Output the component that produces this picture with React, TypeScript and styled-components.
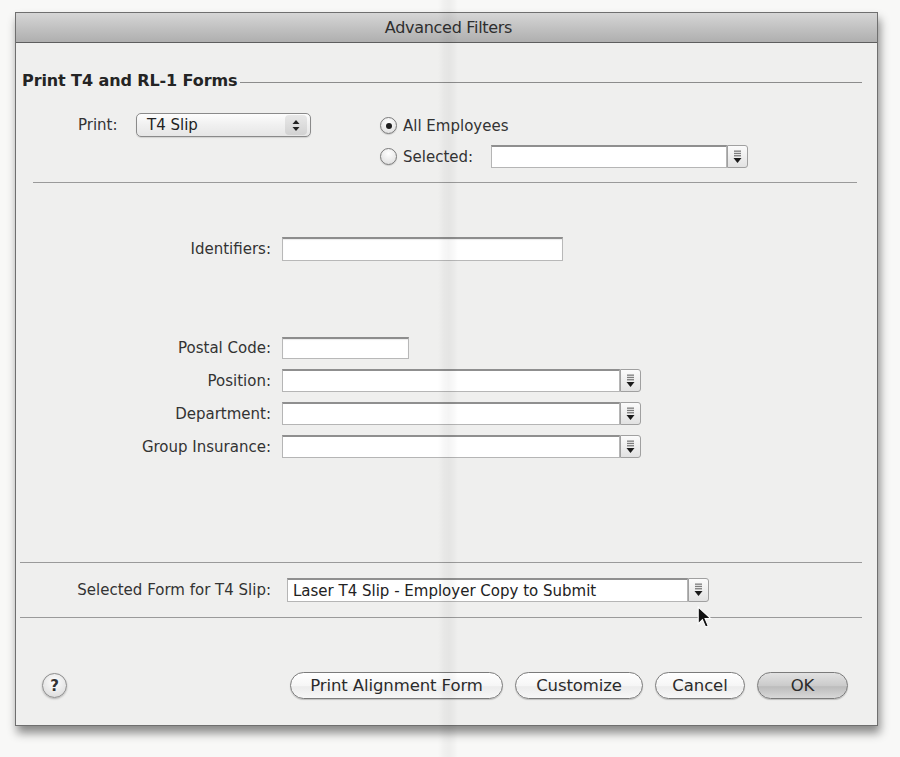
import React from "react";
import styled, { createGlobalStyle, css } from "styled-components";

const GlobalStyle = createGlobalStyle`
  html, body { margin: 0; padding: 0; }
  body {
    background: #f8f8f7;
    font-family: "DejaVu Sans", "Open Sans", sans-serif;
    color: #2e2e2e;
  }
`;

const Page = styled.div`
  position: relative;
  width: 900px;
  height: 757px;
  padding: 12px 0 0 15px;
  box-sizing: border-box;
  overflow: hidden;
`;

const Gutter = styled.div`
  position: absolute;
  top: 0;
  bottom: 0;
  left: 438px;
  width: 20px;
  pointer-events: none;
  background: linear-gradient(
    to right,
    transparent,
    rgba(0, 0, 0, 0.03) 30%,
    rgba(0, 0, 0, 0.045) 55%,
    rgba(0, 0, 0, 0.025) 80%,
    transparent
  );
  z-index: 2;
`;

const Dialog = styled.div`
  width: 863px;
  height: 714px;
  box-sizing: border-box;
  border: 1px solid #6f6f6f;
  background: #efefee;
  box-shadow: 2px 7px 9px rgba(0, 0, 0, 0.45);
  display: flex;
  flex-direction: column;
`;

const TitleBar = styled.div`
  height: 29px;
  flex: none;
  border-bottom: 1px solid #5e5e5e;
  background: linear-gradient(#d6d6d6, #c2c2c2 50%, #afafaf);
  display: flex;
  align-items: center;
  justify-content: center;
  font-size: 16px;
  color: #2e2e2e;
  letter-spacing: -0.3px;
  padding-left: 4px;
`;

const Body = styled.div`
  flex: 1;
  display: flex;
  flex-direction: column;
`;

const SectionHeader = styled.div`
  margin: 28px 15px 0 6px;
  display: flex;
  align-items: center;
  gap: 3px;
  height: 18px;
`;

const HeaderText = styled.span`
  font-weight: bold;
  font-size: 16px;
  color: #242424;
  letter-spacing: -0.1px;
  white-space: nowrap;
`;

const HeaderRule = styled.div`
  flex: 1;
  height: 1px;
  background: #8c8c8c;
  margin-top: 5px;
`;

const PrintSection = styled.div`
  margin: 24px 0 0 62px;
  display: flex;
  align-items: flex-start;
`;

const InlineLabel = styled.span`
  font-size: 15px;
  color: #333;
  line-height: 24px;
  width: 58px;
  flex: none;
`;

const PopUp = styled.div`
  width: 175px;
  height: 24px;
  box-sizing: border-box;
  border: 1px solid #8a8a8a;
  border-radius: 5px;
  background: linear-gradient(#fdfdfd, #f0f0f0 50%, #e6e6e6);
  display: flex;
  align-items: center;
  box-shadow: 0 1px 1px rgba(0, 0, 0, 0.12);
  flex: none;
`;

const PopUpText = styled.span`
  flex: 1;
  font-size: 15px;
  padding-left: 10px;
  color: #222;
`;

const PopUpArrows = styled.div`
  width: 22px;
  height: 20px;
  margin-right: 3px;
  border-radius: 4px;
  background: linear-gradient(#e8e8e8, #d2d2d2);
  display: flex;
  align-items: center;
  justify-content: center;
`;

const RadioGroup = styled.div`
  margin-left: 69px;
  display: flex;
  flex-direction: column;
  gap: 8px;
  padding-top: 1px;
`;

const RadioRow = styled.div`
  display: flex;
  align-items: center;
  height: 23px;
`;

const RadioCircle = styled.span<{ $checked?: boolean }>`
  width: 17px;
  height: 17px;
  box-sizing: border-box;
  border-radius: 50%;
  border: 1px solid #7a7a7a;
  background: radial-gradient(circle at 50% 30%, #ffffff, #dadada);
  box-shadow: 0 1px 1px rgba(0, 0, 0, 0.15);
  display: flex;
  align-items: center;
  justify-content: center;
  margin-right: 6px;
  flex: none;
  ${(p) =>
    p.$checked &&
    css`
      &::after {
        content: "";
        width: 6px;
        height: 6px;
        border-radius: 50%;
        background: #1e1e1e;
      }
    `}
`;

const RadioLabel = styled.span<{ $w?: number }>`
  font-size: 15px;
  color: #333;
  ${(p) => p.$w && css`width: ${p.$w}px;`}
`;

const ComboWrap = styled.div<{ $w: number; $h?: number }>`
  width: ${(p) => p.$w}px;
  height: ${(p) => p.$h ?? 23}px;
  display: flex;
  flex: none;
`;

const ComboField = styled.div`
  flex: 1;
  box-sizing: border-box;
  background: #fff;
  border: 1px solid #b5b5b5;
  border-top: 2px solid #8f8f8f;
  font-size: 15px;
  color: #222;
  display: flex;
  align-items: center;
  padding-left: 5px;
  white-space: nowrap;
  overflow: hidden;
`;

const ComboButton = styled.div`
  width: 21px;
  flex: none;
  box-sizing: border-box;
  border: 1px solid #a0a0a0;
  border-radius: 0 3px 3px 0;
  background: linear-gradient(#fbfbfb, #e2e2e2);
  display: flex;
  align-items: center;
  justify-content: center;
`;

const TextField = styled.div<{ $w: number; $h?: number }>`
  width: ${(p) => p.$w}px;
  height: ${(p) => p.$h ?? 24}px;
  box-sizing: border-box;
  background: #fff;
  border: 1px solid #b8b8b8;
  border-top: 2px solid #8d8d8d;
  box-shadow: inset 0 1px 1px rgba(0, 0, 0, 0.08);
`;

const Separator = styled.div<{ $left: number; $right: number; $top: number }>`
  height: 1px;
  background: #9a9a9a;
  margin: ${(p) => `${p.$top}px ${p.$right}px 0 ${p.$left}px`};
  flex: none;
`;

const FieldRow = styled.div<{ $top: number; $labelW?: number; $gap?: number }>`
  display: grid;
  grid-template-columns: ${(p) => p.$labelW ?? 255}px auto;
  column-gap: ${(p) => p.$gap ?? 11}px;
  align-items: center;
  margin-top: ${(p) => p.$top}px;
  justify-content: start;
`;

const FieldLabel = styled.span`
  font-size: 15px;
  color: #333;
  text-align: right;
  white-space: nowrap;
`;

const Footer = styled.div`
  margin: 54px 29px 0 26px;
  display: flex;
  align-items: center;
`;

const HelpButton = styled.div`
  width: 25px;
  height: 25px;
  box-sizing: border-box;
  border-radius: 50%;
  border: 1px solid #8c8c8c;
  background: radial-gradient(circle at 50% 35%, #ffffff, #e2e2e2 70%, #cfcfcf);
  box-shadow: 0 1px 2px rgba(0, 0, 0, 0.25);
  display: flex;
  align-items: center;
  justify-content: center;
  font-size: 15px;
  font-weight: bold;
  color: #333;
`;

const ButtonBar = styled.div`
  margin-left: auto;
  display: flex;
  align-items: center;
  gap: 12px;
`;

const PushButton = styled.div<{ $w: number; $default?: boolean }>`
  width: ${(p) => p.$w}px;
  height: 27px;
  box-sizing: border-box;
  border-radius: 14px;
  border: 1px solid #7b7b7b;
  background: ${(p) =>
    p.$default
      ? "linear-gradient(#e2e2e2, #cbcbcb 50%, #bcbcbc 55%, #d8d8d8)"
      : "linear-gradient(#ffffff, #f6f6f6 50%, #ececec 55%, #f7f7f7)"};
  box-shadow: 0 1px 1px rgba(0, 0, 0, 0.2);
  display: flex;
  align-items: center;
  justify-content: center;
  font-size: 16.5px;
  color: #2b2b2b;
  letter-spacing: -0.1px;
`;

const Cursor = styled.svg`
  position: absolute;
  left: 697px;
  top: 606px;
  z-index: 3;
`;

function StepperArrows() {
  return (
    <svg width="8" height="13" viewBox="0 0 8 13">
      <path d="M4 1 L7.5 5 H0.5 Z" fill="#222" />
      <path d="M4 12 L7.5 8 H0.5 Z" fill="#222" />
    </svg>
  );
}

function ComboArrow() {
  return (
    <svg width="9" height="14" viewBox="0 0 9 14">
      <rect x="1" y="0.5" width="7" height="1.3" fill="#7c7c7c" />
      <rect x="1" y="2.8" width="7" height="1.3" fill="#7c7c7c" />
      <rect x="1" y="5.1" width="7" height="1.3" fill="#7c7c7c" />
      <path d="M0.5 8 H8.5 L4.5 13 Z" fill="#1a1a1a" />
    </svg>
  );
}

function Combo({ width, height, value }: { width: number; height?: number; value?: string }) {
  return (
    <ComboWrap $w={width} $h={height}>
      <ComboField>{value}</ComboField>
      <ComboButton>
        <ComboArrow />
      </ComboButton>
    </ComboWrap>
  );
}

export default function App() {
  return (
    <Page>
      <GlobalStyle />
      <Dialog>
        <TitleBar>Advanced Filters</TitleBar>
        <Body>
          <SectionHeader>
            <HeaderText>Print T4 and RL-1 Forms</HeaderText>
            <HeaderRule />
          </SectionHeader>

          <PrintSection>
            <InlineLabel>Print:</InlineLabel>
            <PopUp>
              <PopUpText>T4 Slip</PopUpText>
              <PopUpArrows>
                <StepperArrows />
              </PopUpArrows>
            </PopUp>
            <RadioGroup>
              <RadioRow>
                <RadioCircle $checked />
                <RadioLabel>All Employees</RadioLabel>
              </RadioRow>
              <RadioRow>
                <RadioCircle />
                <RadioLabel $w={88}>Selected:</RadioLabel>
                <Combo width={257} />
              </RadioRow>
            </RadioGroup>
          </PrintSection>

          <Separator $left={17} $right={20} $top={14} />

          <FieldRow $top={54}>
            <FieldLabel>Identifiers:</FieldLabel>
            <TextField $w={281} />
          </FieldRow>

          <FieldRow $top={76}>
            <FieldLabel>Postal Code:</FieldLabel>
            <TextField $w={127} $h={22} />
          </FieldRow>

          <FieldRow $top={10}>
            <FieldLabel>Position:</FieldLabel>
            <Combo width={359} />
          </FieldRow>

          <FieldRow $top={10}>
            <FieldLabel>Department:</FieldLabel>
            <Combo width={359} />
          </FieldRow>

          <FieldRow $top={10}>
            <FieldLabel>Group Insurance:</FieldLabel>
            <Combo width={359} />
          </FieldRow>

          <Separator $left={4} $right={15} $top={104} />

          <FieldRow $top={15} $gap={16}>
            <FieldLabel>Selected Form for T4 Slip:</FieldLabel>
            <Combo width={422} height={24} value="Laser T4 Slip - Employer Copy to Submit" />
          </FieldRow>

          <Separator $left={4} $right={15} $top={15} />

          <Footer>
            <HelpButton>?</HelpButton>
            <ButtonBar>
              <PushButton $w={213}>Print Alignment Form</PushButton>
              <PushButton $w={128}>Customize</PushButton>
              <PushButton $w={90}>Cancel</PushButton>
              <PushButton $w={91} $default>
                OK
              </PushButton>
            </ButtonBar>
          </Footer>
        </Body>
      </Dialog>
      <Gutter />
      <Cursor width="15" height="23" viewBox="0 0 14 22">
        <path
          d="M1 1 L1 17 L5 13 L8 20 L10.5 19 L7.5 12 L13 12 Z"
          fill="#111"
          stroke="#fff"
          strokeWidth="1"
        />
      </Cursor>
    </Page>
  );
}
